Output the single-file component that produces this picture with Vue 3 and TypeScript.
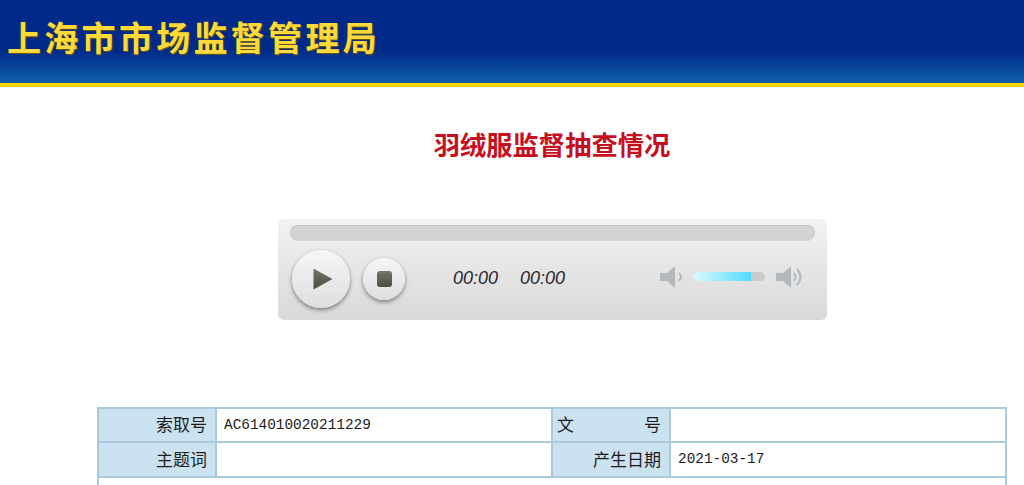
<script setup lang="ts">
const title = '羽绒服监督抽查情况'
</script>

<template>
  <div class="page">
    <header class="banner">
      <h1 class="brand">上海市市场监督管理局</h1>
    </header>
    <h2 class="title">{{ title }}</h2>
    <section class="player">
      <div class="seek"></div>
      <div class="controls">
        <button class="btn play" aria-label="播放">
          <svg width="20" height="22" viewBox="0 0 20 22"><defs><linearGradient id="g1" x1="0" y1="0" x2="0" y2="1"><stop offset="0" stop-color="#77756a"/><stop offset="1" stop-color="#4d4b42"/></linearGradient></defs><path d="M0.5 0.5 L19.5 11 L0.5 21.5 Z" fill="url(#g1)"/></svg>
        </button>
        <button class="btn stop" aria-label="停止"><span class="square"></span></button>
        <div class="times">
          <span>00:00</span>
          <span>00:00</span>
        </div>
        <div class="volume">
          <svg width="24" height="24" viewBox="0 0 24 24"><path d="M0 8 H7 L15 1 V23 L7 16 H0 Z" fill="#b4b9bd"/><path d="M19 8 Q23 12 19 16" fill="none" stroke="#b4b9bd" stroke-width="2"/></svg>
          <div class="vol-track"><div class="vol-fill" :style="{ width: '80%' }"></div></div>
          <svg width="28" height="24" viewBox="0 0 28 24"><path d="M0 8 H7 L15 1 V23 L7 16 H0 Z" fill="#b4b9bd"/><path d="M18 8 Q21 12 18 16" fill="none" stroke="#b4b9bd" stroke-width="2"/><path d="M21 4 Q28 12 21 20" fill="none" stroke="#b4b9bd" stroke-width="2"/></svg>
        </div>
      </div>
    </section>
    <table class="info">
      <colgroup>
        <col class="c1" /><col class="c2" /><col class="c1" /><col class="c2" />
      </colgroup>
      <tbody>
        <tr class="r1">
          <th>索取号</th>
          <td>AC614010020211229</td>
          <th class="spread"><span>文</span><span>号</span></th>
          <td></td>
        </tr>
        <tr>
          <th>主题词</th>
          <td></td>
          <th>产生日期</th>
          <td>2021-03-17</td>
        </tr>
        <tr>
          <td colspan="4" class="tall"></td>
        </tr>
      </tbody>
    </table>
  </div>
</template>

<style>
html, body { overflow: hidden; background: #fff; }
</style>

<style scoped>
.page {
  height: 485px;
  overflow: hidden;
  font-family: "Noto Sans CJK SC", "Liberation Sans", sans-serif;
}
.banner {
  height: 83px;
  box-sizing: content-box;
  border-bottom: 4px solid #ffd800;
  background: linear-gradient(#00298a 0, #00298a 50px, #0f5fa8 83px);
  display: flex;
  align-items: center;
}
.brand {
  margin: 0 0 9px 7px;
  font-size: 34px;
  line-height: 40px;
  font-weight: 700;
  letter-spacing: 3.3px;
  color: #ffd93a;
  text-shadow: 1px 1px 1px #6b5a10;
}
.title {
  margin: 42px 0 0;
  height: 90px;
  padding-left: 80px;
  text-align: center;
  font-family: "Noto Sans CJK SC", serif;
  font-size: 26.3px;
  line-height: 30px;
  font-weight: 700;
  color: #c80f1e;
}
.player {
  box-sizing: border-box;
  width: 549px;
  height: 101px;
  margin-left: 278px;
  padding: 6px 12px 0;
  border-radius: 6px;
  background: linear-gradient(#f2f2f2, #d9d9d9);
}
.seek {
  height: 16px;
  border-radius: 8px;
  background: #d3d3d3;
  box-shadow: inset 0 1px 1px #c4c4c4;
}
.controls {
  display: flex;
  align-items: center;
  margin-top: 9px;
  padding-left: 2px;
}
.btn {
  flex: none;
  display: flex;
  align-items: center;
  justify-content: center;
  padding: 0;
  border: none;
  border-radius: 50%;
  background: linear-gradient(#f6f6f6, #dedede);
  box-shadow: 0 2px 4px rgba(0, 0, 0, 0.45);
}
.play {
  width: 58px;
  height: 58px;
  padding-left: 4px;
}
.stop {
  width: 42px;
  height: 42px;
  margin-left: 13px;
}
.square {
  width: 15px;
  height: 16px;
  border-radius: 3px;
  background: linear-gradient(#77756a, #4d4b42);
}
.times {
  display: flex;
  gap: 22px;
  margin-left: 48px;
  margin-bottom: 2px;
  font-family: "Liberation Sans", sans-serif;
  font-style: italic;
  font-size: 18px;
  line-height: 22px;
  color: #2a2a33;
}
.volume {
  display: flex;
  align-items: center;
  margin-left: 95px;
  margin-bottom: 5px;
}
.vol-track {
  width: 72px;
  height: 9px;
  margin: 0 11px 0 9px;
  border-radius: 5px;
  background: #c9cbcd;
  overflow: hidden;
}
.vol-fill {
  height: 100%;
  border-radius: 5px 0 0 5px;
  background: linear-gradient(90deg, #dff8fd, #4fdcfb);
}
.info {
  margin: 87px 0 0 97px;
  width: 908px;
  table-layout: fixed;
  border-collapse: collapse;
}
.c1 { width: 118px; }
.c2 { width: 336px; }
.info th, .info td {
  height: 35px;
  padding: 0 7px;
  border: 2px solid #a9c9dd;
  box-sizing: border-box;
  font-size: 17px;
  font-weight: 400;
  color: #1c1c1c;
}
.info .r1 th, .info .r1 td {
  height: 34px;
}
.info th {
  padding: 0 8px 3px 4px;
  text-align: right;
  background: #cbe2f0;
}
.info td {
  padding-bottom: 1px;
  font-family: "Liberation Mono", monospace;
  font-size: 14.4px;
}
.spread span:first-child {
  float: left;
}
.tall {
  height: 60px !important;
}
</style>
